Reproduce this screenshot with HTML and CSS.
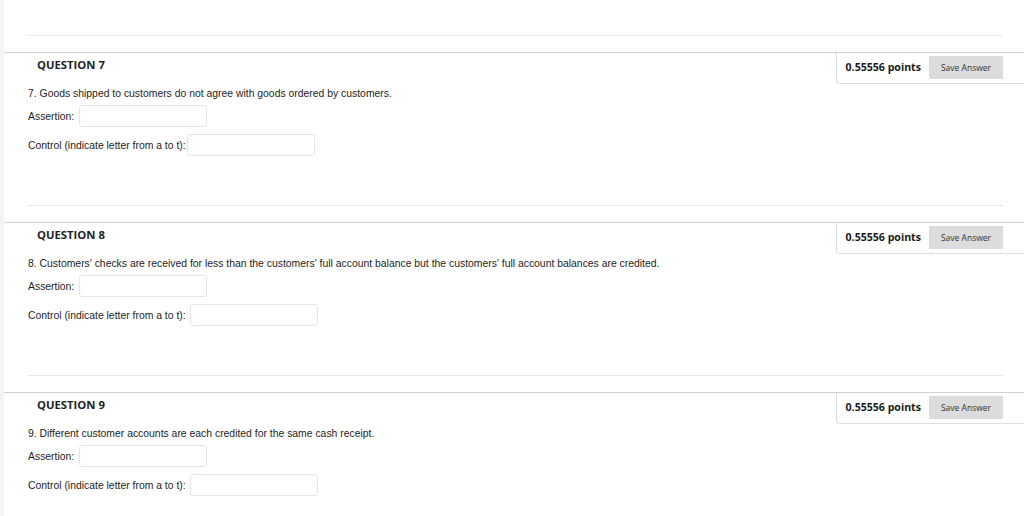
FILE: index.html
```html
<!DOCTYPE html>
<html>
<head>
<meta charset="utf-8">
<link rel="stylesheet" href="styles.css">
</head>
<body>
<div class="page">
  <div class="question">
    <div class="sep"></div>
    <div class="qhead">
      <h3 class="qtitle">QUESTION 7</h3>
      <div class="points">
        <span class="pts">0.55556 points</span>
        <button class="save">Save Answer</button>
      </div>
    </div>
    <div class="qbody">
      <p class="qtext">7. Goods shipped to customers do not agree with goods ordered by customers.</p>
      <div class="field"><label class="lbl">Assertion:</label><input class="inp" type="text"></div>
      <div class="field field2"><label class="lbl">Control (indicate letter from a to t):</label><input class="inp" type="text"></div>
    </div>
  </div>
  <div class="question">
    <div class="sep"></div>
    <div class="qhead">
      <h3 class="qtitle">QUESTION 8</h3>
      <div class="points">
        <span class="pts">0.55556 points</span>
        <button class="save">Save Answer</button>
      </div>
    </div>
    <div class="qbody">
      <p class="qtext">8. Customers' checks are received for less than the customers' full account balance but the customers' full account balances are credited.</p>
      <div class="field"><label class="lbl">Assertion:</label><input class="inp" type="text"></div>
      <div class="field field2"><label class="lbl">Control (indicate letter from a to t): </label><input class="inp" type="text"></div>
    </div>
  </div>
  <div class="question">
    <div class="sep"></div>
    <div class="qhead">
      <h3 class="qtitle">QUESTION 9</h3>
      <div class="points">
        <span class="pts">0.55556 points</span>
        <button class="save">Save Answer</button>
      </div>
    </div>
    <div class="qbody">
      <p class="qtext">9. Different customer accounts are each credited for the same cash receipt.</p>
      <div class="field"><label class="lbl">Assertion:</label><input class="inp" type="text"></div>
      <div class="field field2"><label class="lbl">Control (indicate letter from a to t): </label><input class="inp" type="text"></div>
    </div>
  </div>
</div>
</body>
</html>
```
FILE: styles.css
```css
html, body {
  margin: 0;
  padding: 0;
  background: #ffffff;
}
body {
  font-family: "Liberation Sans", Arial, sans-serif;
  color: #222;
  overflow: hidden;
  height: 516px;
}
.page {
  border-left: 4px solid #f4f4f4;
  padding-top: 35px;
  height: 516px;
  overflow: hidden;
  box-sizing: border-box;
}
.question {
  height: 170px;
}
.sep {
  height: 1px;
  background: #e8e8e8;
  margin: 0 21px 0 24px;
}
.qhead {
  margin-top: 16px;
  border-top: 1px solid #cfcfcf;
  display: flex;
  justify-content: space-between;
  align-items: flex-start;
}
.qtitle {
  margin: 0;
  padding: 5px 0 0 33px;
  font-family: "Open Sans", sans-serif;
  font-weight: 700;
  font-size: 11.3px;
  line-height: 14px;
  color: #222;
}
.points {
  display: flex;
  align-items: flex-start;
  height: 31px;
  box-sizing: border-box;
  border-left: 1px solid #dedede;
  border-bottom: 1px solid #dedede;
  border-bottom-left-radius: 4px;
  padding: 3px 21px 0 9px;
}
.pts {
  font-family: "Open Sans", sans-serif;
  font-weight: 700;
  font-size: 10.6px;
  line-height: 23px;
  color: #1a1a1a;
}
.save {
  width: 74px;
  height: 23px;
  margin: 0 0 0 8px;
  border: none;
  background: #dcdcdc;
  font-family: "Open Sans", sans-serif;
  font-size: 8.5px;
  color: #333;
  padding: 0;
}
.qbody {
  padding: 3px 0 0 24px;
}
.qtext {
  margin: 0;
  font-size: 10.4px;
  line-height: 14px;
  color: #1e1e1e;
}
.field {
  display: flex;
  align-items: center;
  margin-top: 4px;
}
.field2 {
  margin-top: 7px;
}
.lbl {
  font-size: 10.4px;
  color: #1e1e1e;
  margin-right: 5px;
  white-space: pre;
}
.field2 .lbl {
  margin-right: 1px;
}
.inp {
  width: 128px;
  height: 22px;
  box-sizing: border-box;
  border: 1px solid #e4e4e4;
  border-radius: 3px;
  background: #fff;
  margin: 0;
  padding: 0;
}
```
